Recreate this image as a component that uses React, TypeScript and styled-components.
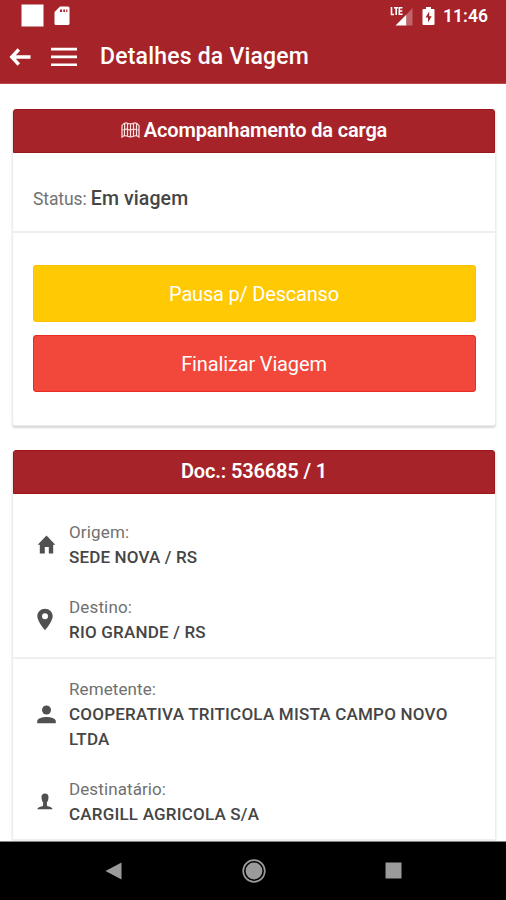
import React from "react";
import styled, { createGlobalStyle } from "styled-components";

const Global = createGlobalStyle`
  * { box-sizing: border-box; }
  html, body { margin: 0; padding: 0; background: #fff; }
  body { font-family: Roboto, "Liberation Sans", sans-serif; color: #505050; overflow: hidden; }
  svg { display: block; flex: none; }
`;

const Screen = styled.div`
  width: 506px;
  height: 900px;
  display: flex;
  flex-direction: column;
  overflow: hidden;
  background: #fff;
`;

const Header = styled.header`
  flex: none;
  height: 84px;
  background: #a62429;
  border-bottom: 1px solid #b8484c;
  color: #fff;
`;

const StatusBar = styled.div`
  height: 30px;
  display: flex;
  align-items: center;
  padding: 1px 18px 0 21px;
`;

const Notifications = styled.div`
  display: flex;
  align-items: center;
  gap: 10px;
  flex: 1;
`;

const SystemIcons = styled.div`
  display: flex;
  align-items: center;
  gap: 8px;
`;

const Clock = styled.time`
  font-size: 17.5px;
  font-weight: 600;
  line-height: 26px;
  letter-spacing: 0.05px;
  margin-left: 8px;
`;

const Toolbar = styled.div`
  height: 54px;
  display: flex;
  align-items: center;
  padding-left: 9px;
`;

const IconButton = styled.button<{ $gap: number }>`
  border: 0;
  padding: 0;
  margin: 0 ${(p) => p.$gap}px 0 0;
  background: none;
  color: inherit;
`;

const Title = styled.h1`
  margin: 0;
  font-size: 23px;
  font-weight: 500;
  line-height: 30px;
  letter-spacing: 0.2px;
  white-space: nowrap;
`;

const Content = styled.main`
  flex: 1;
  min-height: 0;
  overflow: hidden;
  padding: 25px 10px 0 12px;
  display: flex;
  flex-direction: column;
  gap: 24px;
`;

const Card = styled.section<{ $height: number }>`
  flex: none;
  height: ${(p) => p.$height}px;
  border: 1px solid #ececec;
  border-top: 0;
  border-radius: 3px;
  background: #fff;
  box-shadow: 0 2px 2px rgba(0, 0, 0, 0.15);
`;

const CardHeader = styled.h2<{ $spacing: number }>`
  margin: 0;
  height: 44px;
  border-radius: 3px 3px 0 0;
  background: #a62429;
  border: 1px solid #9b151b;
  padding-bottom: 2px;
  display: flex;
  align-items: center;
  justify-content: center;
  gap: 4px;
  color: #fff;
  font-size: 20px;
  font-weight: 600;
  line-height: 26px;
  letter-spacing: ${(p) => p.$spacing}px;
  white-space: nowrap;
`;

const StatusRow = styled.div`
  height: 80px;
  padding: 13px 20px 0;
  border-bottom: 2px solid #efefef;
  display: flex;
  align-items: center;
`;

const StatusLine = styled.p`
  margin: 0;
  font-size: 17.5px;
  line-height: 28px;
  letter-spacing: -0.1px;
  color: #727272;
  white-space: nowrap;
`;

const StatusValue = styled.strong`
  font-size: 19.5px;
  font-weight: 500;
  letter-spacing: 0.1px;
  color: #454545;
`;

const Actions = styled.div`
  padding: 32px 19.5px 0;
  display: flex;
  flex-direction: column;
  gap: 13px;
`;

const ActionButton = styled.button<{ $color: string; $edge: string; $spacing: number }>`
  height: 57px;
  padding: 0;
  border: 0;
  border-radius: 4px;
  background: ${(p) => p.$color};
  box-shadow: inset 0 0 0 1px ${(p) => p.$edge};
  color: #fff;
  font-family: inherit;
  font-size: 20px;
  letter-spacing: ${(p) => p.$spacing}px;
`;

const Group = styled.div<{ $first?: boolean }>`
  padding: ${(p) => (p.$first ? "26px 20px 13px" : "18px 20px 12px")};
  border-bottom: 2px solid #efefef;
  display: flex;
  flex-direction: column;
  gap: ${(p) => (p.$first ? 25 : 26)}px;
`;

const Row = styled.div`
  display: flex;
  align-items: center;
  gap: 12px;
`;

const IconCell = styled.span`
  flex: none;
  width: 24px;
  display: flex;
  padding-left: 4px;
  color: #505050;
`;

const Label = styled.div<{ $spacing: number }>`
  font-size: 17px;
  line-height: 25px;
  letter-spacing: ${(p) => p.$spacing}px;
  color: #707070;
`;

const Value = styled.div<{ $spacing: number }>`
  font-size: 17px;
  font-weight: 500;
  line-height: 24.5px;
  letter-spacing: ${(p) => p.$spacing}px;
  color: #454545;
`;

const NavBar = styled.nav`
  flex: none;
  height: 59px;
  background: #000;
  border-top: 1px solid #858585;
  display: flex;
  align-items: center;
  justify-content: space-between;
  padding: 0 104px 1px 105px;
`;

const BatteryIcon = () => (
  <svg width="13" height="20" viewBox="0 0 13 20">
    <path d="M4 1h5v2h2.500q1 0 1 1v14q0 1-1 1h-10q-1 0-1-1V4q0-1 1-1H4z" fill="#fff" />
    <path d="M7.200 5.500 3.500 11.500h2.500v5l3.700-6.200H7.200z" fill="#a62429" />
  </svg>
);

const SignalIcon = () => (
  <svg width="24" height="22" viewBox="0 0 24 22">
    <path d="M5.500 20.500 16.500 9.500v11z" fill="#fff" />
    <path d="M16.500 9.500 22.500 3v17.500h-6z" fill="#c0666a" />
    <g stroke="#fff" strokeWidth="1.600" fill="none">
      <path d="M1.500 2v7.500h2.500M4 2.700h4M6.200 2.700V10M12.500 2.700H9.300V9.300h3.200M9.300 6h3" />
    </g>
  </svg>
);

const SdCardIcon = () => (
  <svg width="16" height="20" viewBox="0 0 16 20">
    <path d="M6 .5h8q1.500 0 1.500 1.500v15.500q0 1.500-1.500 1.500H2q-1.500 0-1.500-1.500V6z" fill="#fff" />
    <path d="M6 3.500h2V6H6zM9.300 3.500h1.700V6H9.300zM12.200 3.500h1.200V6h-1.200z" fill="#a62429" />
  </svg>
);

const BackIcon = () => (
  <svg width="23" height="18" viewBox="0 0 23 18" fill="none" stroke="#fff" strokeWidth="3.400">
    <path d="M21.500 9H3M9.800 1.500 2.800 9l7 7.500" />
  </svg>
);

const MenuIcon = () => (
  <svg width="26" height="20" viewBox="0 0 26 20" fill="#fff">
    <path d="M0 .8h26v2.700H0zM0 8.600h26v2.700H0zM0 16.400h26v2.700H0z" />
  </svg>
);

const MapIcon = () => (
  <svg width="19" height="16" viewBox="0 0 19 16" fill="none" stroke="#fbe4e4" strokeWidth="1.200">
    <path d="M1 3.500Q3.500.2 6.500 1.200q3 1.300 6 0 3-1 5.500 2.300V15q-2.500-2-5.500-.8-3 1.300-6 0Q3.500 13 1 15zM6.500 1.500v12.700M12.500 1.500v12.700M9.500 2.500v12M3.700 1.500l-.3 12M15.500 1.500v12M1.500 8l4-1 4 1.200 3-1.200 5 1" />
  </svg>
);

const HomeIcon = () => (
  <svg width="19" height="19" viewBox="0 0 19 19" fill="currentColor">
    <path d="M9.500.5 18.300 9.800h-2.100V18.500h-4.400v-6.500h-4v6.500H2.800V9.800H.7z" />
  </svg>
);

const PinIcon = () => (
  <svg width="16" height="23" viewBox="0 0 16 23" fill="currentColor">
    <path fillRule="evenodd" d="M8 .8C3.800.8.3 4 .3 8.300.3 13.300 8 22.300 8 22.300s7.700-9 7.700-14C15.700 4 12.200.8 8 .8zM8 5.200a3 3 0 1 1 0 6 3 3 0 0 1 0-6z" />
  </svg>
);

const PersonIcon = () => (
  <svg width="19" height="19" viewBox="0 0 19 19" fill="currentColor">
    <circle cx="9.500" cy="5" r="4.500" />
    <path d="M.2 18.300v-2.200C.2 13.400 6 12 9.500 12s9.300 1.400 9.300 4.100v2.200z" />
  </svg>
);

const ReceiverIcon = () => (
  <svg width="16" height="17" viewBox="0 0 16 17" fill="currentColor">
    <path d="M8 .5c2.700 0 3.700 1.700 3.500 4.200-.2 2.500-.9 3.800-1.600 4.600v3.200c.4 1.200 5.600.9 5.600 3.800H.5c0-2.900 5.200-2.600 5.600-3.800V9.300C5.400 8.500 4.700 7.200 4.500 4.700 4.300 2.200 5.300.5 8 .5z" />
  </svg>
);

type Entry = { icon: React.ReactNode; label: string; value: string; labelSpacing: number; valueSpacing: number };

const route: Entry[] = [
  { icon: <HomeIcon />, label: "Origem:", value: "SEDE NOVA / RS", labelSpacing: 0.15, valueSpacing: 0.15 },
  { icon: <PinIcon />, label: "Destino:", value: "RIO GRANDE / RS", labelSpacing: 0.15, valueSpacing: 0.2 },
];

const parties: Entry[] = [
  { icon: <PersonIcon />, label: "Remetente:", value: "COOPERATIVA TRITICOLA MISTA CAMPO NOVO LTDA", labelSpacing: 0.1, valueSpacing: 0.22 },
  { icon: <ReceiverIcon />, label: "Destinatário:", value: "CARGILL AGRICOLA S/A", labelSpacing: 0.1, valueSpacing: 0.2 },
];

const Entries = ({ items }: { items: Entry[] }) => (
  <>
    {items.map((e) => (
      <Row key={e.label}>
        <IconCell>{e.icon}</IconCell>
        <div>
          <Label $spacing={e.labelSpacing}>{e.label}</Label>
          <Value $spacing={e.valueSpacing}>{e.value}</Value>
        </div>
      </Row>
    ))}
  </>
);

export default function App() {
  return (
    <Screen>
      <Global />
      <Header>
        <StatusBar>
          <Notifications>
            <svg width="23" height="23" viewBox="0 0 23 23"><path d="M.5.500h22v22H.500z" fill="#fff" /></svg>
            <SdCardIcon />
          </Notifications>
          <SystemIcons>
            <SignalIcon />
            <BatteryIcon />
          </SystemIcons>
          <Clock>11:46</Clock>
        </StatusBar>
        <Toolbar>
          <IconButton $gap={19} aria-label="Voltar"><BackIcon /></IconButton>
          <IconButton $gap={23} aria-label="Menu"><MenuIcon /></IconButton>
          <Title>Detalhes da Viagem</Title>
        </Toolbar>
      </Header>
      <Content>
        <Card $height={317}>
          <CardHeader $spacing={-0.15}><MapIcon />Acompanhamento da carga</CardHeader>
          <StatusRow>
            <StatusLine>Status: <StatusValue>Em viagem</StatusValue></StatusLine>
          </StatusRow>
          <Actions>
            <ActionButton $color="#ffc903" $edge="#fcc400" $spacing={-0.2}>Pausa p/ Descanso</ActionButton>
            <ActionButton $color="#f2473b" $edge="#e92b24" $spacing={-0.15}>Finalizar Viagem</ActionButton>
          </Actions>
        </Card>
        <Card $height={420}>
          <CardHeader $spacing={-0.15}>Doc.: 536685 / 1</CardHeader>
          <Group $first><Entries items={route} /></Group>
          <Group><Entries items={parties} /></Group>
        </Card>
      </Content>
      <NavBar>
        <svg width="17" height="18" viewBox="0 0 17 18"><path d="M16.500.5v17L.5 9z" fill="#9b9b9b" /></svg>
        <svg width="24" height="24" viewBox="0 0 24 24">
          <circle cx="12" cy="12" r="10.800" fill="none" stroke="#9b9b9b" strokeWidth="1.700" />
          <circle cx="12" cy="12" r="8.400" fill="#9b9b9b" />
        </svg>
        <svg width="17" height="17" viewBox="0 0 17 17"><path d="M.5.500h16v16H.500z" fill="#9b9b9b" /></svg>
      </NavBar>
    </Screen>
  );
}
